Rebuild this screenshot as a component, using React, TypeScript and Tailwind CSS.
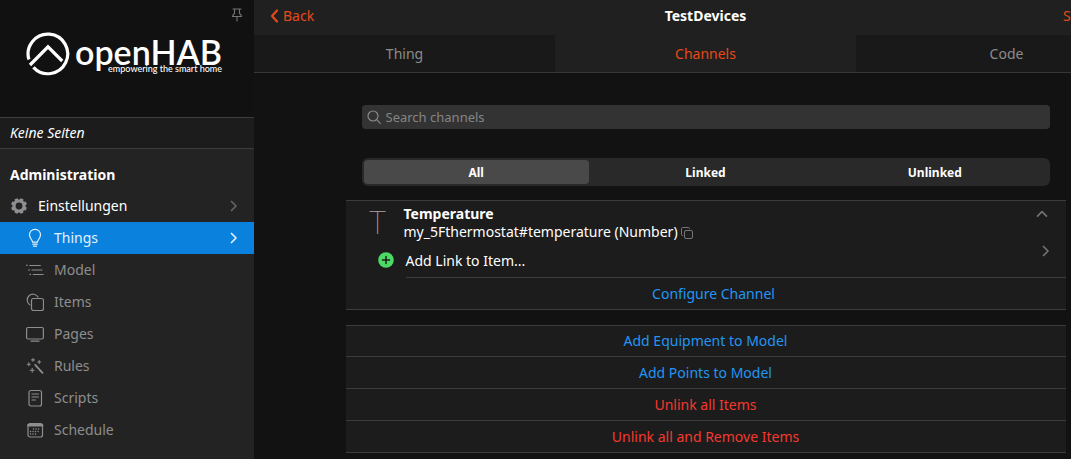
import React from "react";

type IconProps = { className?: string };

const stroke = {
  fill: "none",
  stroke: "currentColor",
  strokeLinecap: "round" as const,
  strokeLinejoin: "round" as const,
};

function PinIcon() {
  return (
    <svg width="12" height="14" viewBox="0 0 12 14" {...stroke} strokeWidth="1.1">
      <path d="M2 1h8M3.5 1v4.5M8.5 1v4.5M3.5 5.5C2.2 6.3 1.6 7.3 1.5 8.5h9C10.4 7.3 9.8 6.3 8.5 5.5M6 8.5v4.5" />
    </svg>
  );
}

function LogoMark() {
  return (
    <svg width="44" height="44" viewBox="0 0 44 44" {...stroke} strokeWidth="3.2" strokeLinecap="butt" strokeLinejoin="miter">
      <path d="M2.9 27.5A19.8 19.8 0 1 1 7.4 35.4" />
      <path d="M4 33L22 14.8L36.2 29" />
    </svg>
  );
}

function GearIcon() {
  const teeth = [0, 45, 90, 135, 180, 225, 270, 315];
  return (
    <svg width="16" height="16" viewBox="0 0 16 16" fill="none" stroke="currentColor">
      <circle cx="8" cy="8" r="5" strokeWidth="3.2" />
      {teeth.map((a) => (
        <path key={a} d="M5.9 2.6L6.5 .1h3l.6 2.500z" fill="currentColor" stroke="none" transform={`rotate(${a + 22.5} 8 8)`} />
      ))}
    </svg>
  );
}

function BulbIcon() {
  return (
    <svg width="18" height="20" viewBox="0 0 18 20" {...stroke} strokeWidth="1.2">
      <path d="M6.600 14.200C6.400 11.700 3.500 10.300 3.500 6.800a5.500 5.500 0 0 1 11 0c0 3.500-2.900 4.900-3.100 7.400zM6.800 16.200h4.400M7.500 18.200h3" />
    </svg>
  );
}

function ModelIcon() {
  return (
    <svg width="18" height="18" viewBox="0 0 18 18" {...stroke} strokeWidth="1.2">
      <path d="M3.800 4.500h10.500M6 9h10M7.200 13.500h10" />
      <path d="M.8 4.200h.1M3 9h.1M4.200 13.500h.1" strokeWidth="1.600" />
    </svg>
  );
}

function ItemsIcon() {
  return (
    <svg width="18" height="18" viewBox="0 0 18 18" {...stroke} strokeWidth="1.2">
      <rect x="5.500" y="5.500" width="12" height="12" rx="2" />
      <path d="M3.800 11.800A5.800 5.800 0 1 1 12 4" />
    </svg>
  );
}

function PagesIcon() {
  return (
    <svg width="18" height="18" viewBox="0 0 18 18" {...stroke} strokeWidth="1.2">
      <rect x=".6" y="2.500" width="16.800" height="11.500" rx="1.500" />
      <path d="M5 16.200h8" />
    </svg>
  );
}

function RulesIcon() {
  return (
    <svg width="18" height="18" viewBox="0 0 18 18" {...stroke} strokeWidth="1.1">
      <path d="M9.200 7.800L16.500 15.800" strokeWidth="1.800" />
      <path d="M7 1.500v2.800M5.600 2.900h2.800M13.200 3.600v2.800M11.800 5h2.800M2.800 5.900v2.800M1.400 7.300h2.800M6.200 11.300v4M4.200 13.300h4" />
    </svg>
  );
}

function ScriptsIcon() {
  return (
    <svg width="18" height="18" viewBox="0 0 18 18" {...stroke} strokeWidth="1.2">
      <rect x="3" y="1.500" width="12.500" height="15.500" rx="2" />
      <path d="M6 5h6.500M6 8h6.500M6 11h3.500" />
    </svg>
  );
}

function ScheduleIcon() {
  return (
    <svg width="18" height="18" viewBox="0 0 18 18" {...stroke} strokeWidth="1.2">
      <rect x="2" y="2.500" width="14.500" height="13.500" rx="2" />
      <path d="M2.500 4.300h13.500" strokeWidth="2.600" />
      <path d="M7.500 8h6.500M4.500 10.500h9.500M4.500 13h6.500" strokeWidth="1.400" strokeDasharray=".1 2.400" />
    </svg>
  );
}

function ChevronRight({ className }: IconProps) {
  return (
    <svg className={className} width="8" height="12" viewBox="0 0 8 12" {...stroke} strokeWidth="1.7">
      <path d="M1.500 1.500L6 6l-4.500 4.500" />
    </svg>
  );
}

function ChevronUp({ className }: IconProps) {
  return (
    <svg className={className} width="12" height="8" viewBox="0 0 12 8" {...stroke} strokeWidth="1.700">
      <path d="M1.500 6.200L6 1.700l4.500 4.500" />
    </svg>
  );
}

function BackIcon() {
  return (
    <svg width="8" height="14" viewBox="0 0 8 14" {...stroke} strokeWidth="2.2">
      <path d="M7 1.500L2 7l5 5.500" />
    </svg>
  );
}

function SearchIcon() {
  return (
    <svg className="shrink-0" width="14" height="14" viewBox="0 0 14 14" {...stroke} strokeWidth="1.2">
      <circle cx="6" cy="6" r="5" />
      <path d="M9.700 9.700L13.300 13.300" />
    </svg>
  );
}

function CopyIcon() {
  return (
    <svg width="12" height="12" viewBox="0 0 12 12" {...stroke} strokeWidth="1">
      <rect x="3.500" y="3.500" width="8" height="8" rx="1.500" />
      <path d="M1.800 8.500h-.3a1 1 0 0 1-1-1v-6a1 1 0 0 1 1-1h6a1 1 0 0 1 1 1v.3" />
    </svg>
  );
}

function AddIcon() {
  return (
    <svg width="16" height="16" viewBox="0 0 16 16">
      <circle cx="8" cy="8" r="7.800" fill="#4cd964" />
      <path d="M8 4.500v7M4.500 8h7" stroke="#1c1c1d" strokeWidth="1.500" strokeLinecap="round" />
    </svg>
  );
}

const adminItems = [
  { label: "Things", Icon: BulbIcon, active: true },
  { label: "Model", Icon: ModelIcon },
  { label: "Items", Icon: ItemsIcon },
  { label: "Pages", Icon: PagesIcon },
  { label: "Rules", Icon: RulesIcon },
  { label: "Scripts", Icon: ScriptsIcon },
  { label: "Schedule", Icon: ScheduleIcon },
];

const modelActions = [
  { label: "Add Equipment to Model", danger: false },
  { label: "Add Points to Model", danger: false },
  { label: "Unlink all Items", danger: true },
  { label: "Unlink all and Remove Items", danger: true },
];

function Sidebar() {
  return (
    <aside className="relative flex w-[254px] shrink-0 flex-col bg-[#232323]">
      <button type="button" aria-label="Pin sidebar" className="absolute top-2 right-[11px] text-[#747478]">
        <PinIcon />
      </button>
      <header className="flex h-[117px] items-start gap-[5px] bg-[#111111] pt-8 pl-[26px] text-white">
        <LogoMark />
        <div className="flex flex-col items-end pt-1 font-['Lato',sans-serif]">
          <span className="text-[34px] leading-8 font-semibold">openHAB</span>
          <span className="-mt-1 text-[9px] leading-[10px] font-medium">empowering the smart home</span>
        </div>
      </header>
      <p className="border-y border-[#3d3d3d] bg-[#1c1c1c] px-2.5 leading-[30px] italic">Keine Seiten</p>
      <nav aria-label="Administration">
        <h2 className="px-2.5 pt-[13px] pb-[3px] leading-[25px] font-bold">Administration</h2>
        <a href="#settings" className="flex h-8 items-center pr-4 pl-[11px]">
          <span className="flex w-[27px] text-[#8e8e93]">
            <GearIcon />
          </span>
          <span className="flex-1">Einstellungen</span>
          <ChevronRight className="text-[#646466]" />
        </a>
        <ul>
          {adminItems.map(({ label, Icon, active }) => (
            <li key={label}>
              <a
                href={`#${label.toLowerCase()}`}
                aria-current={active ? "page" : undefined}
                className={
                  active
                    ? "flex h-8 items-center bg-[#0b81de] pr-4 pl-[26px] text-[#e4f1fb]"
                    : "flex h-8 items-center pr-4 pl-[26px] text-[#8e8e8e]"
                }
              >
                <span className="flex w-7">
                  <Icon />
                </span>
                <span className="flex-1">{label}</span>
                {active && <ChevronRight />}
              </a>
            </li>
          ))}
        </ul>
      </nav>
    </aside>
  );
}

function Tab({ label, active }: { label: string; active?: boolean }) {
  return (
    <button
      type="button"
      role="tab"
      aria-selected={!!active}
      className={active ? "flex-1 text-[#e64a19]" : "flex-1 bg-[#191919] text-[#8c8c8c]"}
    >
      {label}
    </button>
  );
}

function Segment({ label, active }: { label: string; active?: boolean }) {
  return (
    <button
      type="button"
      aria-pressed={!!active}
      className={active ? "flex-1 rounded bg-[#494949] pt-0.5" : "flex-1 rounded pt-0.5"}
    >
      {label}
    </button>
  );
}

export default function App() {
  return (
    <div className="flex min-h-screen overflow-hidden bg-[#121212] font-['Noto_Sans',sans-serif] text-[14px] leading-[18px] text-white">
      <Sidebar />
      <main className="min-w-[903px] flex-1">
        <header className="border-b border-[#363636] bg-[#202020]">
          <div className="grid h-[35px] grid-cols-3 items-center px-4 pb-1">
            <a href="#back" className="flex items-center gap-[5px] text-[#e64a19]">
              <BackIcon />
              Back
            </a>
            <h1 className="text-center font-bold">TestDevices</h1>
            <button type="button" className="justify-self-end text-[#e64a19]">
              Save (Ctrl-S)
            </button>
          </div>
          <div role="tablist" className="flex h-[37px]">
            <Tab label="Thing" />
            <Tab label="Channels" active />
            <Tab label="Code" />
          </div>
        </header>

        <div className="mx-auto max-w-[720px] pt-8">
          <div className="px-4">
            <label className="flex h-6 items-center gap-[5px] rounded bg-[#333333] px-[5px] text-[#8a8a8a]">
              <SearchIcon />
              <input
                type="search"
                aria-label="Search channels"
                placeholder="Search channels"
                className="w-full bg-transparent text-[13px] leading-[18px] outline-none placeholder:text-[#858585]"
              />
            </label>
            <div className="mt-[29px] flex h-7 gap-1 rounded-md bg-[#292929] p-0.5 text-[12px] font-bold">
              <Segment label="All" active />
              <Segment label="Linked" />
              <Segment label="Unlinked" />
            </div>
          </div>

          <section className="mt-3.5 border-y border-[#3d3d3d] bg-[#1c1c1c]">
            <div className="flex items-start pt-1 pr-[18px] pl-6">
              <span className="w-[34px] pt-px text-[32px] leading-8 font-thin text-[#b0a4a8]">T</span>
              <div className="flex-1">
                <h2 className="font-bold">Temperature</h2>
                <p className="flex items-center gap-[3px]">
                  my_5Fthermostat#temperature (Number)
                  <button type="button" aria-label="Copy channel" className="pt-0.5 text-[#77777b]">
                    <CopyIcon />
                  </button>
                </p>
              </div>
              <button type="button" aria-label="Collapse" className="pt-[5px] text-[#727274]">
                <ChevronUp />
              </button>
            </div>
            <a href="#add-link" className="flex pl-8">
              <span className="w-7 pt-[11px]">
                <AddIcon />
              </span>
              <span className="flex h-[37px] flex-1 items-start justify-between border-b border-[#3d3d3d] pr-4">
                <span className="pt-[11px]">Add Link to Item...</span>
                <ChevronRight className="mt-1 text-[#727274]" />
              </span>
            </a>
            <button type="button" className="block w-full pl-4 leading-[31px] text-[#2196f3]">
              Configure Channel
            </button>
          </section>

          <ul className="mt-[15px] divide-y divide-[#3d3d3d] border-y border-[#3d3d3d] bg-[#1c1c1c]">
            {modelActions.map(({ label, danger }) => (
              <li key={label} className="first:-mt-px">
                <button
                  type="button"
                  className={
                    danger
                      ? "block w-full leading-[31px] text-[#f5392f]"
                      : "block w-full leading-[31px] text-[#2196f3]"
                  }
                >
                  {label}
                </button>
              </li>
            ))}
          </ul>
        </div>
      </main>
    </div>
  );
}
